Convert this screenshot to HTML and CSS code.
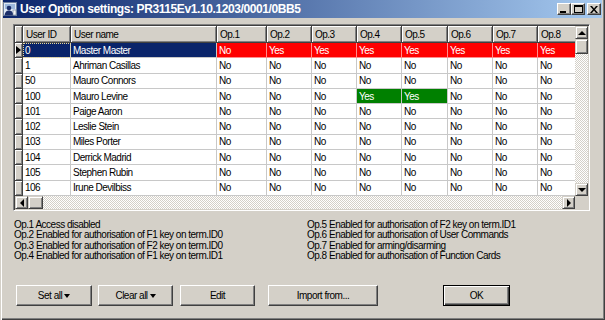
FILE: index.html
```html
<!DOCTYPE html>
<html>
<head>
  <title>User Option settings</title>
  <link rel="stylesheet" href="styles.css">
</head>
<body>
<div class="window">
  <div class="titlebar">
    <svg class="appicon" width="16" height="16" viewBox="0 0 16 16">
      <rect x="1.5" y="1.5" width="13" height="13" fill="#dfe8f4" stroke="#6d7f9c"/>
      <rect x="3" y="3" width="10" height="5" fill="#9cb8dc"/>
      <circle cx="7" cy="7" r="2.3" fill="#1c2f6a"/>
      <path d="M2.5 14.5 C3 10.5 5 9.5 7 9.5 C9 9.5 11 10.5 11.5 14.5 Z" fill="#1c2f6a"/>
      <rect x="11" y="9" width="3" height="5" fill="#f4f4f4" stroke="#6d7f9c" stroke-width="0.6"/>
    </svg>
    <span class="title">User Option settings: PR3115Ev1.10.1203/0001/0BB5</span>
    <div class="caption">
      <span class="cap"><svg width="8" height="7" viewBox="0 0 8 7"><rect x="0" y="5" width="6" height="2" fill="#000"/></svg></span>
      <span class="cap"><svg width="9" height="8" viewBox="0 0 9 8"><rect x="0.5" y="0.5" width="8" height="7" fill="none" stroke="#000"/><rect x="0" y="0" width="9" height="2" fill="#000"/></svg></span>
      <span class="cap close"><svg width="8" height="7" viewBox="0 0 8 7"><path d="M0 0h2l2 2.5L6 0h2L5 3.5 8 7H6L4 4.5 2 7H0l3-3.5z" fill="#000"/></svg></span>
    </div>
  </div>

  <div class="client">
    <div class="grid">
      <div class="cells">
        <table class="data">
          <colgroup>
            <col class="c-ind"><col class="c-id"><col class="c-name"><col class="c-op1">
            <col class="c-op"><col class="c-op"><col class="c-op"><col class="c-op5">
            <col class="c-op"><col class="c-op"><col class="c-op">
          </colgroup>
          <tr class="head">
            <th class="ind"></th><th>User ID</th><th>User name</th><th>Op.1</th><th>Op.2</th><th>Op.3</th><th>Op.4</th><th>Op.5</th><th>Op.6</th><th>Op.7</th><th>Op.8</th>
          </tr>
          <tr>
            <td class="ind"><span class="pointer"></span></td><td class="sel focus">0</td><td class="sel">Master Master</td>
            <td class="red">No</td><td class="red">Yes</td><td class="red">Yes</td><td class="red">Yes</td><td class="red">Yes</td><td class="red">Yes</td><td class="red">Yes</td><td class="red">Yes</td>
          </tr>
          <tr>
            <td class="ind"></td><td>1</td><td>Ahriman Casillas</td>
            <td>No</td><td>No</td><td>No</td><td>No</td><td>No</td><td>No</td><td>No</td><td>No</td>
          </tr>
          <tr>
            <td class="ind"></td><td>50</td><td>Mauro Connors</td>
            <td>No</td><td>No</td><td>No</td><td>No</td><td>No</td><td>No</td><td>No</td><td>No</td>
          </tr>
          <tr>
            <td class="ind"></td><td>100</td><td>Mauro Levine</td>
            <td>No</td><td>No</td><td>No</td><td class="grn">Yes</td><td class="grn">Yes</td><td>No</td><td>No</td><td>No</td>
          </tr>
          <tr>
            <td class="ind"></td><td>101</td><td>Paige Aaron</td>
            <td>No</td><td>No</td><td>No</td><td>No</td><td>No</td><td>No</td><td>No</td><td>No</td>
          </tr>
          <tr>
            <td class="ind"></td><td>102</td><td>Leslie Stein</td>
            <td>No</td><td>No</td><td>No</td><td>No</td><td>No</td><td>No</td><td>No</td><td>No</td>
          </tr>
          <tr>
            <td class="ind"></td><td>103</td><td>Miles Porter</td>
            <td>No</td><td>No</td><td>No</td><td>No</td><td>No</td><td>No</td><td>No</td><td>No</td>
          </tr>
          <tr>
            <td class="ind"></td><td>104</td><td>Derrick Madrid</td>
            <td>No</td><td>No</td><td>No</td><td>No</td><td>No</td><td>No</td><td>No</td><td>No</td>
          </tr>
          <tr>
            <td class="ind"></td><td>105</td><td>Stephen Rubin</td>
            <td>No</td><td>No</td><td>No</td><td>No</td><td>No</td><td>No</td><td>No</td><td>No</td>
          </tr>
          <tr>
            <td class="ind"></td><td>106</td><td>Irune Devilbiss</td>
            <td>No</td><td>No</td><td>No</td><td>No</td><td>No</td><td>No</td><td>No</td><td>No</td>
          </tr>
        </table>
      </div>
      <div class="vscroll">
        <span class="sbtn"><span class="arrow up"></span></span>
        <span class="thumb v"></span>
        <span class="track"></span>
        <span class="sbtn"><span class="arrow down"></span></span>
      </div>
      <div class="hscroll">
        <span class="sbtn"><span class="arrow left"></span></span>
        <span class="thumb h"></span>
        <span class="track"></span>
        <span class="sbtn"><span class="arrow right"></span></span>
      </div>
      <div class="corner"></div>
    </div>

    <div class="legend">
      <div>
        <p>Op.1 Access disabled</p>
        <p>Op.2 Enabled for authorisation of F1 key on term.ID0</p>
        <p>Op.3 Enabled for authorisation of F2 key on term.ID0</p>
        <p>Op.4 Enabled for authorisation of F1 key on term.ID1</p>
      </div>
      <div>
        <p>Op.5 Enabled for authorisation of F2 key on term.ID1</p>
        <p>Op.6 Enabled for authorisation of User Commands</p>
        <p>Op.7 Enabled for arming/disarming</p>
        <p>Op.8 Enabled for authorisation of Function Cards</p>
      </div>
    </div>

    <div class="buttons">
      <button class="btn set">Set all<span class="drop"></span></button>
      <button class="btn clear">Clear all<span class="drop"></span></button>
      <button class="btn edit">Edit</button>
      <button class="btn import">Import from...</button>
      <button class="btn ok">OK</button>
    </div>
  </div>
</div>
</body>
</html>
```

FILE: styles.css
```css
body {
  margin: 0;
  font-family: "Liberation Sans", Arial, sans-serif;
  font-size: 10px;
  letter-spacing: -0.5px;
  color: #000;
}

/* dialog frame */
.window {
  width: 605px;
  height: 320px;
  box-sizing: border-box;
  padding: 0 3px 3px 3px;
  background: #d4d0c8;
  box-shadow: inset 1px 0 #d4d0c8, inset 2px 0 #fff, inset -1px -1px #404040, inset -2px -2px #808080;
  display: flex;
  flex-direction: column;
}

.titlebar {
  height: 18px;
  display: flex;
  align-items: center;
  background: linear-gradient(to right, #0a246a, #a6caf0);
  color: #fff;
}

.appicon {
  margin: 0 2px 0 -1px;
}

.title {
  flex: 1;
  font-size: 12px;
  font-weight: bold;
  letter-spacing: -0.4px;
  white-space: nowrap;
}

.caption {
  display: flex;
  margin-right: 1px;
}

.cap {
  width: 14px;
  height: 12px;
  box-sizing: border-box;
  background: #d4d0c8;
  border: 1px solid;
  border-color: #fff #404040 #404040 #fff;
  box-shadow: inset -1px -1px #808080;
  display: flex;
  align-items: center;
  justify-content: center;
}

.cap.close {
  margin-left: 2px;
}

.client {
  flex: 1;
  padding: 6px 0 0 10px;
  display: flex;
  flex-direction: column;
}

/* data grid */
.grid {
  width: 577px;
  box-sizing: border-box;
  border: 1px solid;
  border-color: #808080 #fff #fff #808080;
  padding: 1px;
  box-shadow: inset 1px 1px #404040, inset -1px -1px #d4d0c8;
  display: grid;
  grid-template-columns: 560px 13px;
  grid-template-rows: 170px 13px;
}

.cells {
  overflow: hidden;
  background: #808080;
}

.data {
  table-layout: fixed;
  border-collapse: separate;
  border-spacing: 0;
  width: 568px;
}

.c-ind { width: 8px; }
.c-id { width: 48px; }
.c-name { width: 146px; }
.c-op1 { width: 50px; }
.c-op { width: 45px; }
.c-op5 { width: 46px; }

.data tr {
  height: 15.3px;
}

.data tr.head {
  height: 17px;
}

.data td,
.data th {
  padding: 0 0 0 2px;
  box-sizing: border-box;
  white-space: nowrap;
  overflow: hidden;
  text-align: left;
  font-weight: normal;
}

.data td {
  background: #fff;
  border-right: 1px solid #c8c8c8;
  border-bottom: 1px solid #c8c8c8;
}

.data th {
  padding-left: 3px;
  background: #d4d0c8;
  border-right: 1px solid #404040;
  border-bottom: 1px solid #404040;
  box-shadow: inset 1px 1px #fff, inset -1px -1px #808080;
}

.data td.ind {
  padding: 0;
  background: #d4d0c8;
  border-right: 1px solid #404040;
  border-bottom: 1px solid #404040;
  box-shadow: inset 1px 1px #fff, inset -1px -1px #808080;
}

.data th.ind {
  padding: 0;
}

.pointer {
  display: block;
  width: 0;
  height: 0;
  margin-left: 1px;
  border-top: 4px solid transparent;
  border-bottom: 4px solid transparent;
  border-left: 5px solid #000;
}

.data td.sel {
  background: #0a246a;
  color: #fff;
}

.data td.focus {
  outline: 1px dotted #e8d898;
  outline-offset: -1px;
}

.data td.red {
  background: #ff0000;
  color: #fff;
  border-color: #ff8c8c;
}

.data td.grn {
  background: #008000;
  color: #fff;
}

/* scrollbars */
.vscroll,
.hscroll {
  display: flex;
}

.vscroll {
  flex-direction: column;
}

.sbtn,
.thumb {
  box-sizing: border-box;
  background: #d4d0c8;
  border: 1px solid;
  border-color: #d4d0c8 #404040 #404040 #d4d0c8;
  box-shadow: inset 1px 1px #fff, inset -1px -1px #808080;
  display: flex;
  align-items: center;
  justify-content: center;
  flex: none;
}

.sbtn {
  width: 13px;
  height: 13px;
}

.thumb.v {
  width: 13px;
  height: 15px;
}

.thumb.h {
  width: 15px;
  height: 13px;
}

.track {
  flex: 1;
  background: repeating-conic-gradient(#d4d0c8 0 25%, #fff 0 50%) 0 0 / 2px 2px;
}

.corner {
  background: #d4d0c8;
}

.arrow {
  width: 0;
  height: 0;
}

.arrow.up {
  border-left: 4px solid transparent;
  border-right: 4px solid transparent;
  border-bottom: 4px solid #000;
}

.arrow.down {
  border-left: 4px solid transparent;
  border-right: 4px solid transparent;
  border-top: 4px solid #000;
}

.arrow.left {
  border-top: 4px solid transparent;
  border-bottom: 4px solid transparent;
  border-right: 4px solid #000;
}

.arrow.right {
  border-top: 4px solid transparent;
  border-bottom: 4px solid transparent;
  border-left: 4px solid #000;
}

/* option descriptions */
.legend {
  margin: 9px 0 0 1px;
  display: grid;
  grid-template-columns: 293px 1fr;
}

.legend p {
  margin: 0;
  line-height: 10.3px;
  white-space: nowrap;
}

/* bottom buttons */
.buttons {
  margin: 24px 0 0 3px;
  display: flex;
}

.btn {
  height: 21px;
  padding: 0;
  box-sizing: border-box;
  font-family: "Liberation Sans", Arial, sans-serif;
  font-size: 10px;
  letter-spacing: -0.5px;
  color: #000;
  background: #d4d0c8;
  border: 1px solid;
  border-color: #fff #404040 #404040 #fff;
  box-shadow: inset -1px -1px #808080;
  display: flex;
  align-items: center;
  justify-content: center;
  gap: 2px;
}

.btn.set { width: 76px; }
.btn.clear { width: 75px; margin-left: 6px; }
.btn.edit { width: 75px; margin-left: 7px; }
.btn.import { width: 110px; margin-left: 13px; }

.btn.ok {
  width: 67px;
  margin-left: 65px;
  border-color: #000;
  box-shadow: inset 1px 1px #fff, inset -1px -1px #404040, inset -2px -2px #808080;
}

.drop {
  width: 0;
  height: 0;
  border-left: 3px solid transparent;
  border-right: 3px solid transparent;
  border-top: 4px solid #000;
}
```
